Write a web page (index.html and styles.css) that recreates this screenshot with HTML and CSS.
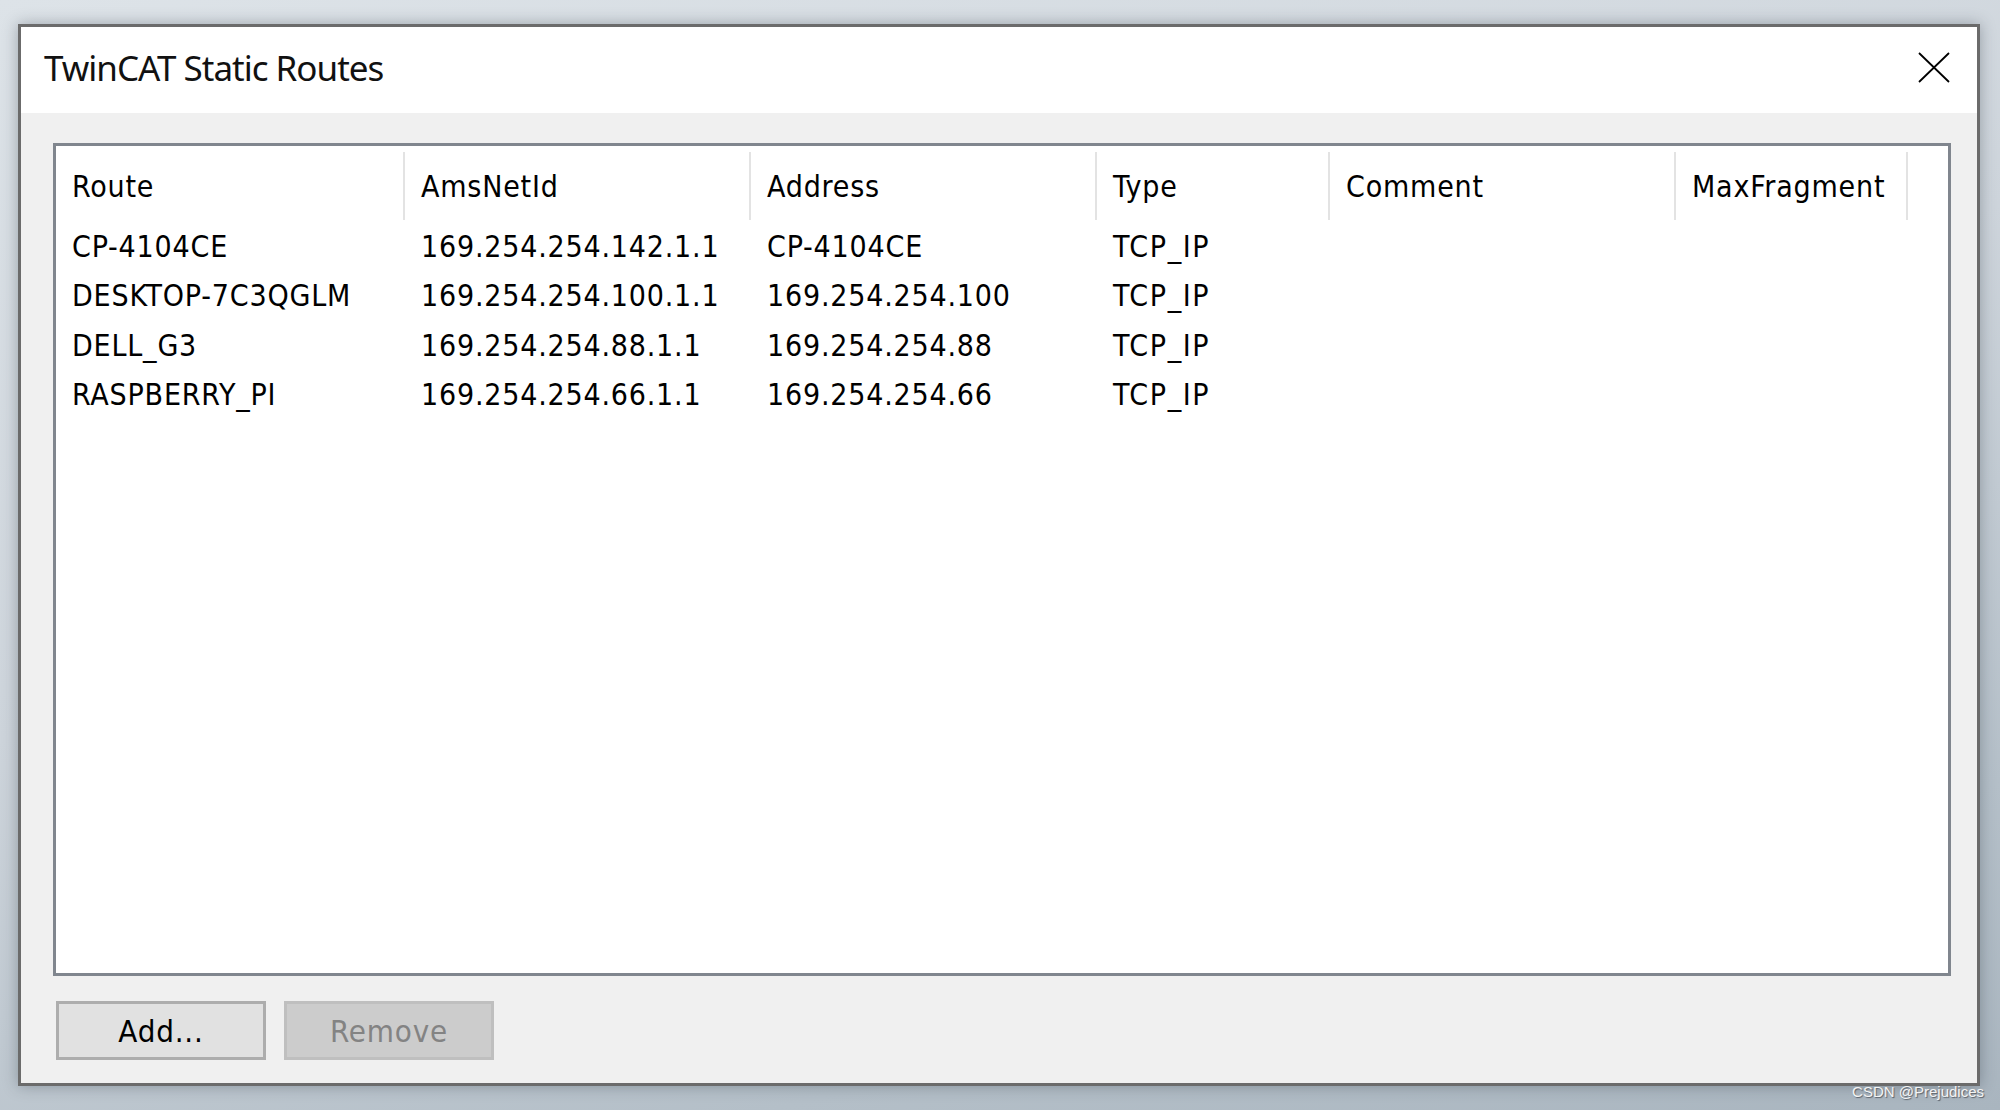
FILE: index.html
```html
<!DOCTYPE html>
<html>
<head>
<meta charset="utf-8">
<title>TwinCAT Static Routes</title>
<link rel="stylesheet" href="styles.css">
</head>
<body>
<div class="dialog">
  <div class="titlebar">
    <div class="title">TwinCAT Static Routes</div>
    <div class="close">
      <svg width="32" height="31" viewBox="0 0 32 31"><path d="M1 1 L31 30 M31 1 L1 30" stroke="#000" stroke-width="1.8" fill="none"/></svg>
    </div>
  </div>
  <div class="content">
    <div class="listbox">
      <div class="lv-header">
        <div class="col-h">Route</div>
        <div class="col-h">AmsNetId</div>
        <div class="col-h">Address</div>
        <div class="col-h">Type</div>
        <div class="col-h">Comment</div>
        <div class="col-h">MaxFragment</div>
      </div>
      <div class="lv-row">
        <div class="cell">CP-4104CE</div>
        <div class="cell">169.254.254.142.1.1</div>
        <div class="cell">CP-4104CE</div>
        <div class="cell type">TCP_IP</div>
        <div class="cell"></div>
        <div class="cell"></div>
      </div>
      <div class="lv-row">
        <div class="cell">DESKTOP-7C3QGLM</div>
        <div class="cell">169.254.254.100.1.1</div>
        <div class="cell">169.254.254.100</div>
        <div class="cell type">TCP_IP</div>
        <div class="cell"></div>
        <div class="cell"></div>
      </div>
      <div class="lv-row">
        <div class="cell">DELL_G3</div>
        <div class="cell">169.254.254.88.1.1</div>
        <div class="cell">169.254.254.88</div>
        <div class="cell type">TCP_IP</div>
        <div class="cell"></div>
        <div class="cell"></div>
      </div>
      <div class="lv-row">
        <div class="cell">RASPBERRY_PI</div>
        <div class="cell">169.254.254.66.1.1</div>
        <div class="cell">169.254.254.66</div>
        <div class="cell type">TCP_IP</div>
        <div class="cell"></div>
        <div class="cell"></div>
      </div>
    </div>
    <div class="buttons">
      <div class="btn">Add...</div>
      <div class="btn disabled">Remove</div>
    </div>
  </div>
</div>
<div class="watermark">CSDN @Prejudices</div>
</body>
</html>
```

FILE: styles.css
```css
html, body {
  margin: 0;
  padding: 0;
}
body {
  width: 2000px;
  height: 1110px;
  overflow: hidden;
  position: relative;
  box-sizing: border-box;
  padding: 24px 0 0 18px;
  background: linear-gradient(165deg, #dde3e8 0%, #cdd4db 45%, #b4bfc8 80%, #a9b5bf 100%);
  font-family: "DejaVu Sans", sans-serif;
  font-stretch: condensed;
  color: #000;
}
.dialog {
  width: 1962px;
  height: 1062px;
  box-sizing: border-box;
  border: 3px solid #6b6b6b;
  background: #f0f0f0;
  display: flex;
  flex-direction: column;
  box-shadow: 0 0 14px rgba(40, 50, 60, 0.35);
}
.titlebar {
  flex: none;
  height: 86px;
  background: #fff;
  display: flex;
  justify-content: space-between;
  align-items: flex-start;
}
.title {
  font-family: "Noto Sans", "Open Sans", sans-serif;
  font-stretch: normal;
  font-size: 35px;
  letter-spacing: -1px;
  line-height: 48px;
  padding: 17px 0 0 23px;
  color: #111;
}
.close {
  margin: 25px 27px 0 0;
  width: 32px;
  height: 31px;
}
.close svg {
  display: block;
}
.content {
  flex: 1;
  display: flex;
  flex-direction: column;
  padding: 30px 26px 23px 32px;
  min-height: 0;
}
.listbox {
  flex: 1;
  background: #fff;
  border: 3px solid #80868e;
}
.lv-header,
.lv-row {
  display: grid;
  grid-template-columns: 349px 346px 346px 233px 346px 232px;
  font-size: 30px;
  letter-spacing: 0.8px;
}
.lv-header {
  padding: 6px 0 2px 0;
}
.col-h {
  height: 68px;
  box-sizing: border-box;
  border-right: 2px solid #e3e3e3;
  padding: 10px 0 0 16px;
  line-height: 49px;
  white-space: nowrap;
}
.lv-row {
  height: 49.3px;
  line-height: 49px;
}
.cell {
  padding-left: 16px;
  white-space: nowrap;
}
.cell.type {
  letter-spacing: 1.6px;
}
.buttons {
  flex: none;
  display: flex;
  gap: 18px;
  margin-top: 25px;
  padding-left: 3px;
}
.btn {
  width: 210px;
  height: 59px;
  box-sizing: border-box;
  border: 3px solid #adadad;
  background: #e1e1e1;
  display: flex;
  align-items: center;
  justify-content: center;
  font-size: 31px;
  letter-spacing: 0.8px;
}
.btn.disabled {
  background: #cccccc;
  border-color: #bfbfbf;
  color: #838383;
}
.watermark {
  position: absolute;
  right: 16px;
  top: 1083px;
  font-family: "Liberation Sans", Arial, sans-serif;
  font-stretch: normal;
  font-size: 15px;
  color: #f4f4f4;
  text-shadow: 1px 1px 1px #5a6068;
}
```
